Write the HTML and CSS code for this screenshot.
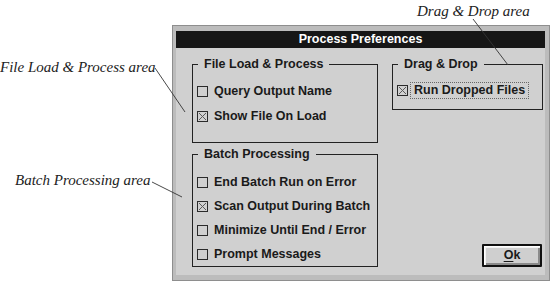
FILE: index.html
```html
<!DOCTYPE html>
<html lang="en">
<head>
<meta charset="utf-8">
<title>Process Preferences</title>
<link rel="stylesheet" href="styles.css">
</head>
<body>
<div class="page">
  <div class="dialog">
    <div class="titlebar">Process Preferences</div>
    <div class="client">
      <div class="col-left">
        <fieldset class="group group-file">
          <legend>File Load &amp; Process</legend>
          <label class="check"><svg class="box" viewBox="0 0 11 11" width="11" height="11"><rect x="0.5" y="0.5" width="10" height="10"/></svg><span class="lbl">Query Output Name</span></label>
          <label class="check"><svg class="box" viewBox="0 0 11 11" width="11" height="11"><rect x="0.5" y="0.5" width="10" height="10"/><path d="M2 2L9 9M9 2L2 9"/></svg><span class="lbl">Show File On Load</span></label>
        </fieldset>
        <fieldset class="group group-batch">
          <legend>Batch Processing</legend>
          <label class="check"><svg class="box" viewBox="0 0 11 11" width="11" height="11"><rect x="0.5" y="0.5" width="10" height="10"/></svg><span class="lbl">End Batch Run on Error</span></label>
          <label class="check"><svg class="box" viewBox="0 0 11 11" width="11" height="11"><rect x="0.5" y="0.5" width="10" height="10"/><path d="M2 2L9 9M9 2L2 9"/></svg><span class="lbl">Scan Output During Batch</span></label>
          <label class="check"><svg class="box" viewBox="0 0 11 11" width="11" height="11"><rect x="0.5" y="0.5" width="10" height="10"/></svg><span class="lbl">Minimize Until End / Error</span></label>
          <label class="check"><svg class="box" viewBox="0 0 11 11" width="11" height="11"><rect x="0.5" y="0.5" width="10" height="10"/></svg><span class="lbl">Prompt Messages</span></label>
        </fieldset>
      </div>
      <div class="col-right">
        <fieldset class="group group-drag">
          <legend>Drag &amp; Drop</legend>
          <label class="check"><svg class="box" viewBox="0 0 11 11" width="11" height="11"><rect x="0.5" y="0.5" width="10" height="10"/><path d="M2 2L9 9M9 2L2 9"/></svg><span class="lbl focus">Run Dropped Files</span></label>
        </fieldset>
        <button class="ok" type="button"><u>O</u>k</button>
      </div>
    </div>
  </div>

  <div class="note note-drag">Drag &amp; Drop area</div>
  <div class="note note-file">File Load &amp; Process area</div>
  <div class="note note-batch">Batch Processing area</div>
  <svg class="leaders" width="552" height="282" viewBox="0 0 552 282">
    <line x1="473" y1="19" x2="508" y2="65"/>
    <line x1="155" y1="68" x2="185" y2="112"/>
    <line x1="152" y1="182" x2="182" y2="197"/>
  </svg>
</div>
</body>
</html>
```
FILE: styles.css
```css
html, body {
  margin: 0;
  padding: 0;
  background: #fff;
}

.page {
  position: relative;
  width: 552px;
  height: 282px;
  box-sizing: border-box;
  padding: 25px 0 0 172px;
  overflow: hidden;
  background: #fff;
}

.dialog {
  width: 378px;
  height: 256px;
  box-sizing: border-box;
  background: #bcbcbc;
  border: 1px solid #8e8e8e;
  padding: 5px 4px 5px 3px;
  display: flex;
  flex-direction: column;
  font-family: "Liberation Sans", Arial, sans-serif;
  font-weight: bold;
  font-size: 12.5px;
  color: #1a1a1a;
}

.titlebar {
  height: 17px;
  line-height: 17px;
  background: #161616;
  color: #fff;
  text-align: center;
}

.client {
  flex: 1;
  background: #d0d0d0;
  display: flex;
  gap: 14px;
  padding: 9px 2px 7px 16px;
}

.col-left {
  width: 186px;
  display: flex;
  flex-direction: column;
  gap: 4px;
}

.col-right {
  width: 151px;
  display: flex;
  flex-direction: column;
}

.group {
  margin: 0;
  border: 1px solid #222;
  padding: 8px 0 13px 4px;
  min-width: 0;
}

.group legend {
  margin-left: 1px;
  padding: 0 6px;
  line-height: 14px;
}

.group-batch {
  padding-top: 9px;
  padding-bottom: 0;
}

.group-drag {
  padding-bottom: 8px;
}

.check {
  display: flex;
  align-items: center;
  height: 25px;
  gap: 2px;
  white-space: nowrap;
}

.group-batch .check {
  height: 24px;
}

.group-drag .check {
  height: 22px;
}

.box {
  flex: none;
  display: block;
}

.box rect {
  fill: none;
  stroke: #2a2a2a;
  stroke-width: 1;
}

.box path {
  stroke: #5a5a5a;
  stroke-width: 1;
  fill: none;
}

.lbl {
  padding: 0 3px;
  line-height: 15px;
  border: 1px solid transparent;
}

.lbl.focus {
  border: 1px dotted #666;
}

.ok {
  margin: auto 1px 1px auto;
  width: 60px;
  height: 23px;
  padding: 0;
  box-sizing: border-box;
  border: 2px solid #111;
  border-radius: 1px;
  background: #cfcfcf;
  box-shadow: inset 1px 1px 0 #fff, inset 2px 2px 0 #f2f2f2, inset -2px -2px 0 #8a8a8a;
  font-family: "Liberation Sans", Arial, sans-serif;
  font-weight: bold;
  font-size: 12.5px;
  color: #1a1a1a;
  line-height: 17px;
}

.ok u {
  text-decoration-thickness: 1px;
  text-underline-offset: 2px;
}

.note {
  position: absolute;
  font-family: "Liberation Serif", "Times New Roman", serif;
  font-style: italic;
  font-size: 15px;
  line-height: 15px;
  color: #222;
  white-space: nowrap;
}

.note-drag {
  left: 417px;
  top: 4px;
}

.note-file {
  left: 0;
  top: 60px;
}

.note-batch {
  left: 15px;
  top: 173px;
}

.leaders {
  position: absolute;
  left: 0;
  top: 0;
  pointer-events: none;
}

.leaders line {
  stroke: #333;
  stroke-width: 0.9;
}
```
